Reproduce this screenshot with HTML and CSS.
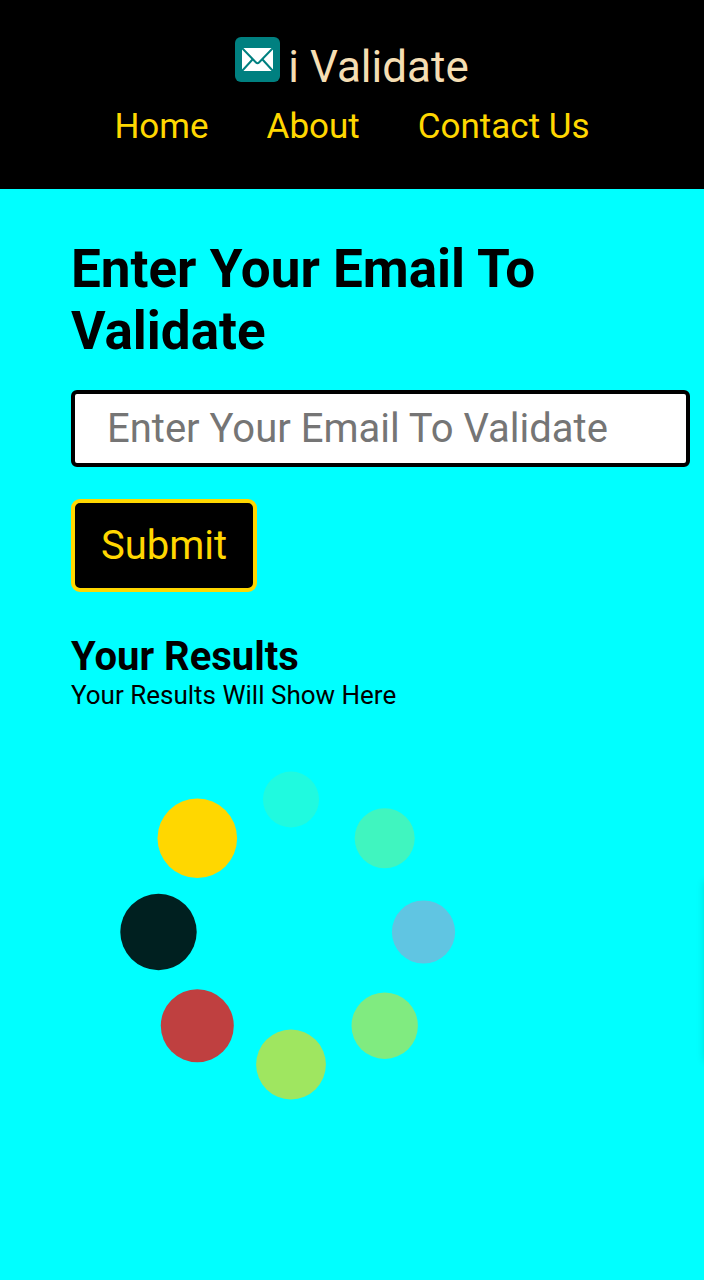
FILE: index.html
```html
<!DOCTYPE html>
<html lang="en">
<head>
<meta charset="utf-8">
<meta name="viewport" content="width=device-width, initial-scale=1">
<title>i Validate</title>
<link rel="stylesheet" href="styles.css">
</head>
<body>
<header class="header">
  <div class="brand">
    <svg class="brand-icon" viewBox="0 0 45 45" aria-hidden="true">
      <rect width="45" height="45" rx="6" fill="#008080"/>
      <rect x="7" y="11" width="31" height="23" rx="1" fill="#fff"/>
      <path d="M7 11 L21 25.500 Q22.500 27 24 25.500 L38 11 M7 34 L17.500 22.500 M38 34 L27.500 22.500" fill="none" stroke="#008080" stroke-width="2"/>
    </svg>
    <span class="brand-name">i Validate</span>
  </div>
  <nav class="nav">
    <a class="nav-link" href="#home">Home</a>
    <a class="nav-link" href="#about">About</a>
    <a class="nav-link" href="#contact">Contact Us</a>
  </nav>
</header>
<main class="main">
  <form class="form">
    <h1 class="title"><label for="email">Enter Your Email To Validate</label></h1>
    <input class="email" id="email" type="text" placeholder="Enter Your Email To Validate">
    <button class="submit" type="submit">Submit</button>
  </form>
  <section class="results">
    <h2 class="subtitle">Your Results</h2>
    <p class="note">Your Results Will Show Here</p>
    <svg class="spinner" viewBox="-220 -220 440 440" role="img" aria-label="Loading">
      <circle cx="0" cy="-132.500" r="28" fill="#20fadf"/>
      <circle cx="93.700" cy="-93.700" r="30" fill="#40f5bf"/>
      <circle cx="132.500" cy="0" r="31.600" fill="#60c5e2"/>
      <circle cx="93.700" cy="93.700" r="33.200" fill="#80eb80"/>
      <circle cx="0" cy="132.500" r="34.900" fill="#9fe660"/>
      <circle cx="-93.700" cy="93.700" r="36.500" fill="#bf4040"/>
      <circle cx="-132.500" cy="0" r="38.200" fill="#002020"/>
      <circle cx="-93.700" cy="-93.700" r="39.800" fill="#ffd700"/>
    </svg>
  </section>
  <div class="edge-handle"></div>
</main>
</body>
</html>
```

FILE: styles.css
```css
* {
  box-sizing: border-box;
  margin: 0;
  padding: 0;
}

body {
  display: flex;
  flex-direction: column;
  min-height: 100vh;
  background: #00ffff;
  color: #000;
  font-family: Roboto, sans-serif;
}

.header {
  display: flex;
  flex-direction: column;
  align-items: center;
  gap: 13px;
  padding: 37px 16px 41px;
  background: #000;
}

.brand {
  display: flex;
  align-items: baseline;
  gap: 8px;
}

.brand-icon {
  width: 45px;
  height: 45px;
}

.brand-name {
  color: #f5deb3;
  font-size: 44px;
  line-height: 52px;
}

.nav {
  display: flex;
  gap: 58px;
}

.nav-link {
  color: #ffd700;
  font-size: 35px;
  line-height: 42px;
  text-decoration: none;
}

.main {
  position: relative;
  flex: 1;
  overflow: hidden;
  padding: 49px 14px 40px 71px;
}

.title {
  margin-bottom: 28px;
  font-size: 53px;
  line-height: 62px;
}

.email {
  display: block;
  width: 100%;
  margin-bottom: 32px;
  padding: 11px 32px;
  border: 4px solid #000;
  border-radius: 6px;
  background: #fff;
  font: 40px/47px Roboto, sans-serif;
}

.email::placeholder {
  color: #757575;
}

.submit {
  padding: 19px 26px;
  border: 4px solid #ffd700;
  border-radius: 9px;
  background: #000;
  color: #ffd700;
  font: 40px/47px Roboto, sans-serif;
}

.results {
  margin-top: 41px;
}

.subtitle {
  font-size: 40px;
  line-height: 47px;
}

.note {
  font-size: 26px;
  line-height: 30px;
}

.spinner {
  display: block;
  width: 440px;
  max-width: 100%;
  margin-top: 2px;
}

/* Soft shadow of the panel tucked behind the right edge */
.edge-handle {
  position: absolute;
  top: 692px;
  left: 100%;
  width: 20px;
  height: 180px;
  box-shadow: 0 0 8px rgba(0, 0, 0, 0.12);
}
```
